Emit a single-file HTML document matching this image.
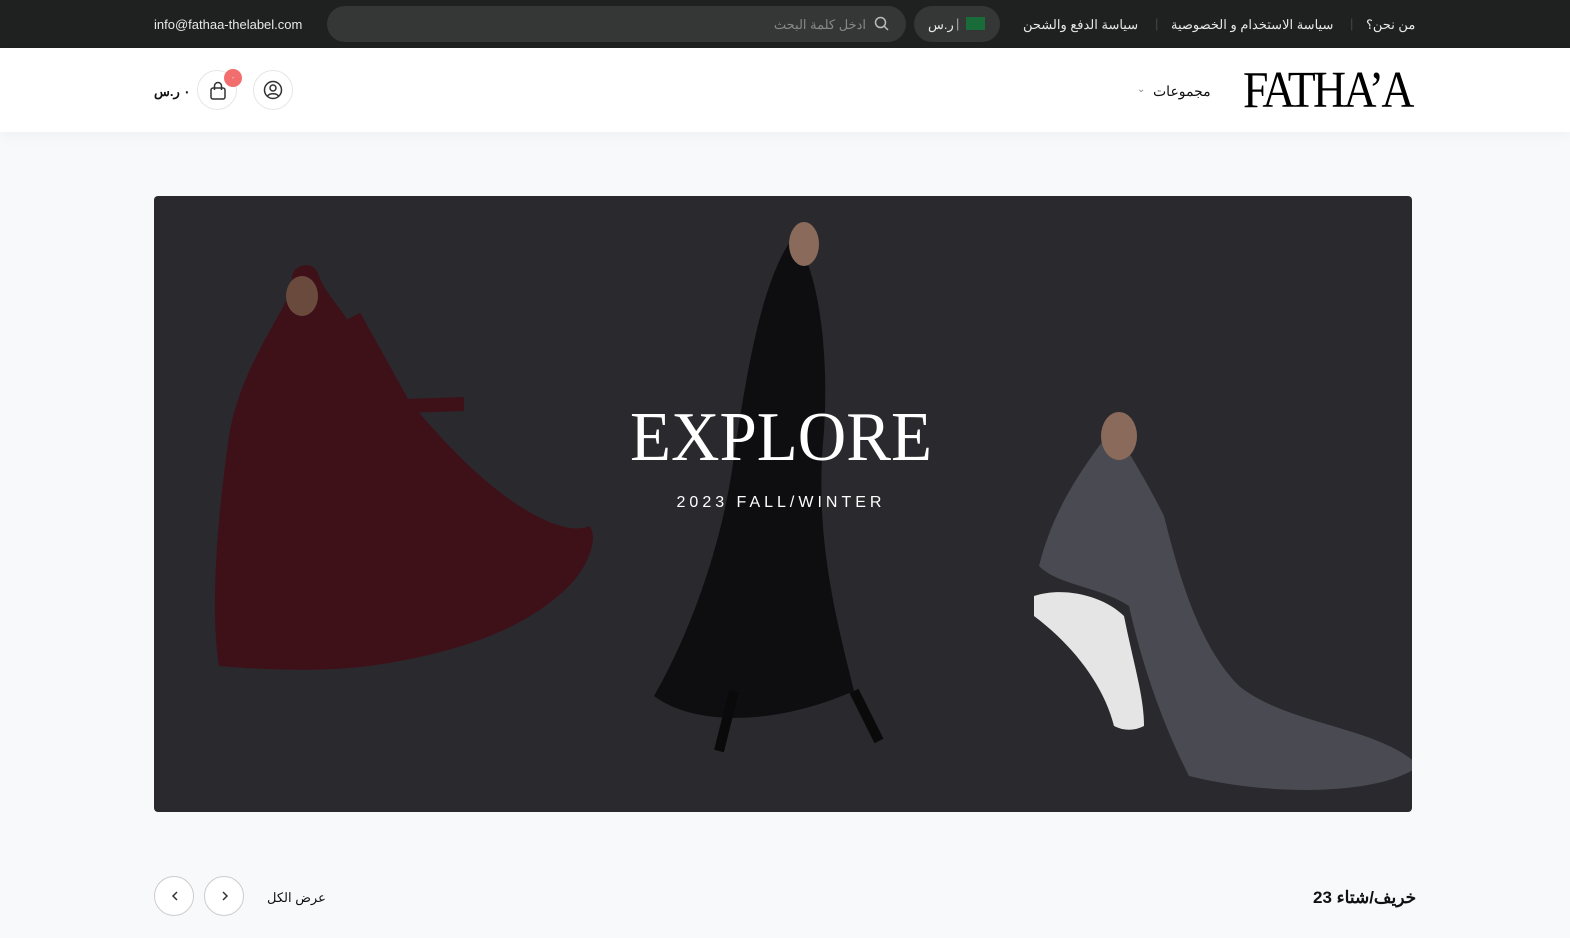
<!DOCTYPE html>
<html><head><meta charset="utf-8"><style>
*{margin:0;padding:0;box-sizing:border-box}
body{width:1570px;height:938px;background:#f8f9fb;font-family:"Liberation Sans","Noto Sans CJK SC",sans-serif;position:relative;overflow:hidden}
.top{position:absolute;left:0;top:0;width:1570px;height:48px;background:#1f2020;color:#e8e8e8;font-size:13px}
.top span{position:absolute;top:17px;white-space:nowrap}
.search{position:absolute;left:327px;top:6px;width:579px;height:36px;border-radius:18px;background:#353636}
.cur{position:absolute;left:914px;top:6px;width:86px;height:36px;border-radius:18px;background:#353636}
.hdr{position:absolute;left:0;top:48px;width:1570px;height:84px;background:#fff;box-shadow:0 4px 14px rgba(0,0,0,.04)}
.circ{position:absolute;width:40px;height:40px;border-radius:50%;border:1px solid #e6e6e6;background:#fff}
.hero{position:absolute;left:154px;top:196px;width:1258px;height:616px;background:#2a292e;border-radius:4px;overflow:hidden}
.nav{position:absolute;top:876px;width:40px;height:40px;border-radius:50%;border:1px solid #ccc;background:#fff}
</style></head><body>
<div class="top">
<span style="left:154px">info@fathaa-thelabel.com</span>
<div class="search"><span style="right:40px;top:11px;color:#888">ادخل كلمة البحث</span>
<svg style="position:absolute;right:17px;top:10px" width="15" height="15" viewBox="0 0 15 15" fill="none" stroke="#bbb" stroke-width="1.5"><circle cx="6.5" cy="6.5" r="5"/><path d="M10 10l4 4"/></svg></div>
<div class="cur"><span style="left:14px;top:11px">ر.س</span><span style="left:42px;top:10px;color:#aaa">|</span><div style="position:absolute;left:52px;top:11px;width:19px;height:13px;background:#1a6b3a"></div></div>
<span style="left:1023px">سياسة الدفع والشحن</span>
<span style="left:1155px;top:16px;color:#444">|</span>
<span style="left:1171px">سياسة الاستخدام و الخصوصية</span>
<span style="left:1350px;top:16px;color:#444">|</span>
<span style="left:1366px">من نحن؟</span>
</div>
<div class="hdr">
<span style="position:absolute;left:154px;top:36px;font-size:13px;font-weight:bold;color:#111">٠ ر.س</span>
<div class="circ" style="left:197px;top:22px"><svg style="position:absolute;left:11px;top:10px" width="18" height="20" viewBox="0 0 18 20" fill="none" stroke="#333" stroke-width="1.5"><rect x="2" y="7" width="14" height="11" rx="2"/><path d="M5.5 9V5a3.5 3.5 0 017 0v4"/></svg></div>
<div style="position:absolute;left:224px;top:21px;width:18px;height:18px;border-radius:50%;background:#f26d6d;color:#fff;font-size:8px;text-align:center;line-height:18px">٠</div>
<div class="circ" style="left:253px;top:22px"><svg style="position:absolute;left:9px;top:9px" width="20" height="20" viewBox="0 0 20 20" fill="none" stroke="#333" stroke-width="1.5"><circle cx="10" cy="10" r="8.5"/><circle cx="10" cy="8" r="3"/><path d="M4.5 16c2-3 9-3 11 0"/></svg></div>
<span style="position:absolute;left:1153px;top:35px;font-size:14px;color:#111">مجموعات</span>
<span style="position:absolute;left:1137px;top:36px;font-size:10px;color:#888">⌄</span>
<div style="position:absolute;left:1243px;top:18px;font-family:'Liberation Serif',serif;font-size:52px;line-height:50px;color:#000;letter-spacing:-3px;transform:scaleX(0.88);transform-origin:left">FATHA’A</div>
</div>
<div class="hero">
<svg width="1258" height="616" viewBox="0 0 1258 616">
<path d="M140 90c-10-20 20-30 25-10 5 15 20 30 40 60 30 40 60 80 100 120 60 60 110 80 130 70 10 10 0 40-20 60-50 50-130 70-200 80-40 5-90 5-150 0-10-60 0-160 10-230 10-60 40-100 65-150z" fill="#3e1119"/>
<path d="M200 120l50 90 60-2" stroke="#3e1119" stroke-width="14" fill="none"/>
<ellipse cx="148" cy="100" rx="16" ry="20" fill="#6b4a3e"/>
<path d="M640 40c-30 40-45 120-60 220-10 80-40 170-80 240 40 30 120 30 200-5-20-80-40-160-30-260 5-80-5-160-30-195z" fill="#0e0e10"/>
<ellipse cx="650" cy="48" rx="15" ry="22" fill="#8a6a5a"/>
<path d="M580 495l-15 60M700 495l25 50" stroke="#0a0a0a" stroke-width="10"/>
<path d="M960 230c-30 40-60 80-75 140 20 20 60 20 90 40 20 90 50 150 60 170 80 20 190 20 230-10-40-40-130-40-180-80-40-40-60-110-75-170-20-40-40-70-50-90z" fill="#4a4a52"/>
<path d="M880 400c30-10 70 0 90 20 10 50 20 80 20 110-10 5-20 5-30 0-10-40-40-80-80-110z" fill="#e5e5e5"/>
<ellipse cx="965" cy="240" rx="18" ry="24" fill="#8a6a5a"/>
<text x="627" y="264" text-anchor="middle" fill="#fff" font-family="Liberation Serif,serif" font-size="70" textLength="302" lengthAdjust="spacingAndGlyphs">EXPLORE</text>
<text x="627" y="311" text-anchor="middle" fill="#fff" font-family="Liberation Sans,sans-serif" font-size="16" letter-spacing="4">2023 FALL/WINTER</text>
</svg>
</div>
<div class="nav" style="left:154px"><svg style="position:absolute;left:14px;top:13px" width="12" height="12" viewBox="0 0 12 12" fill="none" stroke="#333" stroke-width="1.5"><path d="M8 2L4 6l4 4"/></svg></div>
<div class="nav" style="left:204px"><svg style="position:absolute;left:14px;top:13px" width="12" height="12" viewBox="0 0 12 12" fill="none" stroke="#333" stroke-width="1.5"><path d="M4 2l4 4-4 4"/></svg></div>
<span style="position:absolute;left:267px;top:890px;font-size:13px;color:#111">عرض الكل</span>
<span style="position:absolute;left:1313px;top:888px;font-size:17px;font-weight:bold;color:#111">خريف/شتاء 23</span>
</body></html>
